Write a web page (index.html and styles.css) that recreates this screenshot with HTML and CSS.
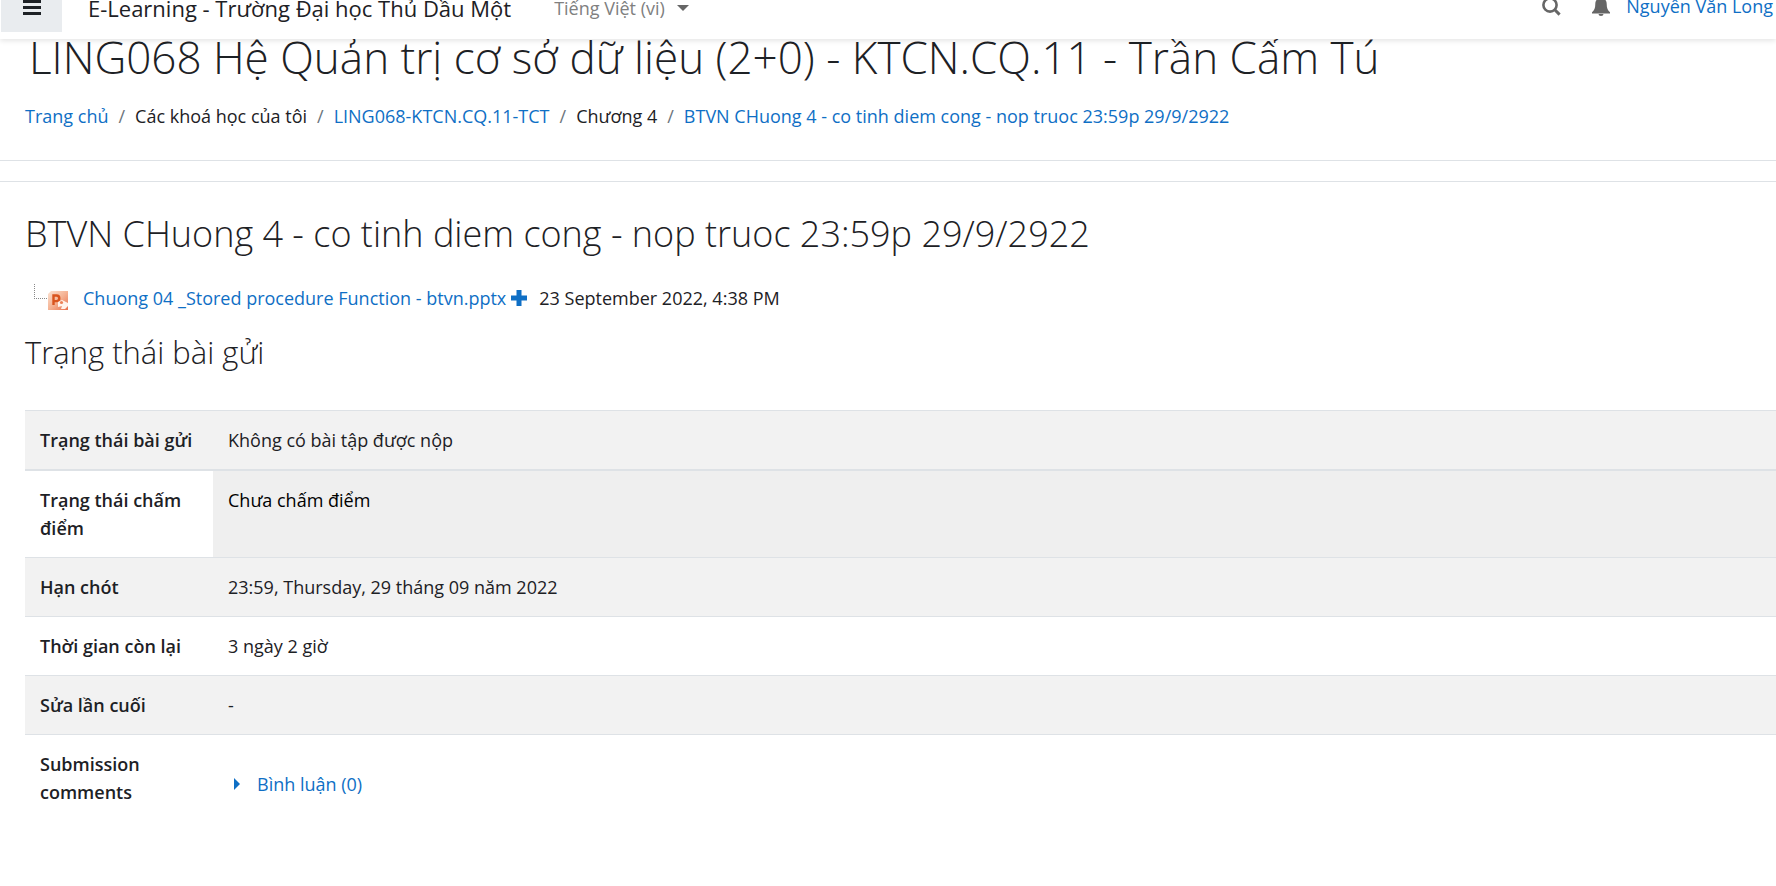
FILE: index.html
```html
<!DOCTYPE html>
<html lang="vi">
<head>
<meta charset="utf-8">
<title>BTVN CHuong 4</title>
<link rel="stylesheet" href="styles.css">
</head>
<body>
<header class="navbar">
  <button class="menu" type="button" aria-label="Menu">
    <svg width="18" height="20" viewBox="0 0 18 20"><path d="M0 3.500h18M0 9.500h18M0 15.500h18" stroke="#1d2125" stroke-width="3"/></svg>
  </button>
  <a class="brand" href="#">E-Learning - Trường Đại học Thủ Dầu Một</a>
  <button class="lang" type="button">Tiếng Việt (vi)
    <svg width="12" height="6" viewBox="0 0 12 6"><path d="M0 0h12L6 6z" fill="#666"/></svg>
  </button>
  <div class="tools">
    <button class="tool" type="button" aria-label="Search">
      <svg width="19" height="19" viewBox="0 0 19 19"><circle cx="8" cy="8" r="6.600" fill="none" stroke="#666" stroke-width="2.600"/><path d="M12.800 12.800l4.800 4.800" stroke="#666" stroke-width="3"/></svg>
    </button>
    <button class="tool" type="button" aria-label="Notifications">
      <svg width="18" height="20" viewBox="0 0 18 20"><path d="M9 0a1.400 1.400 0 0 1 1.300 2C13 2.600 14.700 5 14.700 8c0 4 1 6.500 3.300 8.300v1.200H0v-1.200C2.300 14.500 3.300 12 3.300 8c0-3 1.700-5.400 4.400-6A1.400 1.400 0 0 1 9 0zM6.500 18h5a2.500 2 0 0 1-5 0z" fill="#666"/></svg>
    </button>
    <a class="user" href="#">Nguyễn Văn Long</a>
  </div>
</header>
<section class="page-header">
  <h1>LING068 Hệ Quản trị cơ sở dữ liệu (2+0) - KTCN.CQ.11 - Trần Cẩm Tú</h1>
  <nav aria-label="Breadcrumb">
    <ol class="crumbs">
      <li><a href="#">Trang chủ</a></li>
      <li>Các khoá học của tôi</li>
      <li><a href="#">LING068-KTCN.CQ.11-TCT</a></li>
      <li>Chương 4</li>
      <li><a href="#">BTVN CHuong 4 - co tinh diem cong - nop truoc 23:59p 29/9/2922</a></li>
    </ol>
  </nav>
</section>
<main class="content">
  <h2>BTVN CHuong 4 - co tinh diem cong - nop truoc 23:59p 29/9/2922</h2>
  <div class="file">
    <svg class="file-icon" width="36" height="28" viewBox="0 0 36 28">
      <defs><linearGradient id="pp" x1="0" y1="0" x2="1" y2="1"><stop offset="0" stop-color="#fbe3d3"/><stop offset=".5" stop-color="#f5b394"/><stop offset="1" stop-color="#e8704c"/></linearGradient></defs>
      <path d="M1.500 0v14M1 14.500h14" fill="none" stroke="#888" stroke-dasharray="1 1"/>
      <path d="M18 7h17v19H15V10z" fill="url(#pp)"/>
      <path d="M20.500 21V11.500h3a2.800 2.800 0 0 1 0 5.600h-3" fill="none" stroke="#d9541e" stroke-width="2.400"/>
      <path d="M25 18l4-2 6 3v3l-3 3h-4l1-3-4 1z" fill="#fff3ec"/>
      <circle cx="28.500" cy="18.500" r="1.600" fill="#ec8258"/>
    </svg>
    <a href="#">Chuong 04 _Stored procedure Function - btvn.pptx</a>
    <svg class="plus" width="16" height="16" viewBox="0 0 16 16"><path d="M8 0v16M0 8h16" stroke="#0f6fc5" stroke-width="5"/></svg>
    <span>23 September 2022, 4:38 PM</span>
  </div>
  <h3>Trạng thái bài gửi</h3>
  <table class="status">
    <tbody>
      <tr><th scope="row">Trạng thái bài gửi</th><td>Không có bài tập được nộp</td></tr>
      <tr class="grading"><th scope="row">Trạng thái chấm điểm</th><td>Chưa chấm điểm</td></tr>
      <tr><th scope="row">Hạn chót</th><td>23:59, Thursday, 29 tháng 09 năm 2022</td></tr>
      <tr><th scope="row">Thời gian còn lại</th><td>3 ngày 2 giờ</td></tr>
      <tr><th scope="row">Sửa lần cuối</th><td>-</td></tr>
      <tr><th scope="row">Submission comments</th><td class="comments"><a href="#"><svg width="6" height="12" viewBox="0 0 6 12"><path d="M0 0l6 6-6 6z" fill="#0f6fc5"/></svg>Bình luận (0)</a></td></tr>
    </tbody>
  </table>
</main>
</body>
</html>
```
FILE: styles.css
```css
* { box-sizing: border-box; }
body {
  margin: 0;
  background: #fff;
  color: #1d2125;
  font: 400 18px/28px "Open Sans", "Noto Sans", sans-serif;
  overflow: hidden;
}
a { color: #0f6fc5; text-decoration: none; }
button { border: 0; padding: 0; background: none; font: inherit; }
h1, h2, h3 { margin: 0; font-weight: 300; }

/* Top bar, partly scrolled out of view */
.navbar {
  position: relative;
  z-index: 1;
  display: flex;
  align-items: center;
  height: 62px;
  margin-top: -23px;
  padding: 0 3px 0 1px;
  background: #fff;
  box-shadow: 0 2px 5px rgba(0, 0, 0, .1);
}
.menu {
  display: flex;
  align-items: center;
  justify-content: center;
  width: 61px;
  height: 48px;
  background: #e9ecef;
}
.brand { margin-left: 26px; color: #1d2125; font-size: 22px; }
.lang {
  display: flex;
  align-items: center;
  gap: 12px;
  margin-left: 43px;
  color: #808080;
}
.tools { display: flex; align-items: center; margin-left: auto; padding-bottom: 4px; }
.tool { display: flex; margin-right: 31px; }
.tool + .tool { margin-right: 16px; }

/* The title slides under the top bar */
.page-header {
  margin-top: -12px;
  padding: 0 25px 30px;
  border-bottom: 1px solid #dee2e6;
}
h1 { padding-left: 4px; font-size: 44px; line-height: 60px; white-space: nowrap; }
.crumbs {
  display: flex;
  margin: 0;
  padding: 15px 0 0;
  list-style: none;
  white-space: nowrap;
}
.crumbs li + li::before { content: "/"; padding: 0 10px; color: #6c757d; }

.content {
  margin-top: 20px;
  padding: 26px 0 0 25px;
  border-top: 1px solid #dee2e6;
}
h2 { font-size: 36px; line-height: 52px; white-space: nowrap; }
.file { display: flex; align-items: center; margin-top: 24px; padding-left: 8px; }
.file-icon { margin-right: 14px; }
.plus { margin: 0 12px 0 5px; }
h3 { margin-top: 18px; font-size: 31px; line-height: 44px; }

.status { width: 100%; margin-top: 36px; border-collapse: collapse; }
.status th, .status td {
  padding: 15px;
  border-top: 1px solid #dee2e6;
  text-align: left;
  vertical-align: top;
}
.status th { width: 188px; font-weight: 600; }
.status tr:nth-child(odd) { background: #f2f2f2; }
.status .grading th, .status .grading td { border-top-width: 2px; }
.grading td { background: #efefef; color: #000; }
.status .comments { padding-top: 35px; padding-left: 21px; }
.comments a { display: flex; align-items: center; gap: 17px; }
```
